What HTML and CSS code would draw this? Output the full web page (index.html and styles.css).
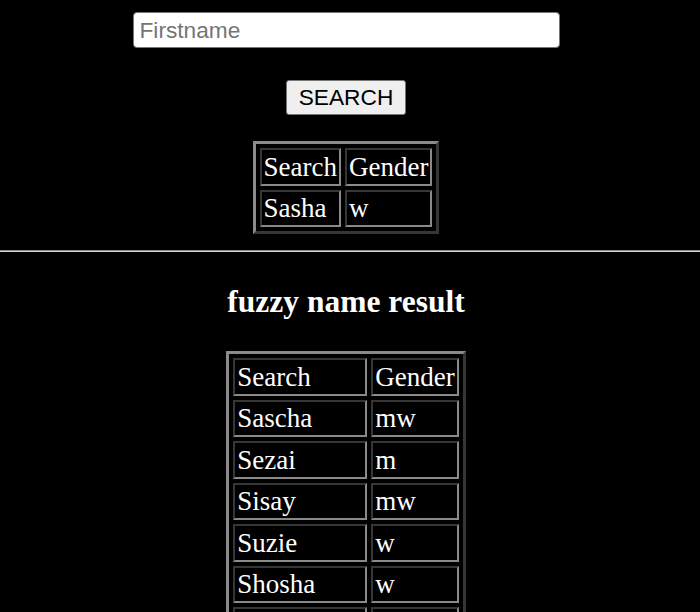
FILE: index.html
```html
<!DOCTYPE html>
<html>
<head>
<meta charset="utf-8">
<link rel="stylesheet" href="styles.css">
</head>
<body>
<div class="top">
  <input class="name-input" type="text" placeholder="Firstname">
  <button class="search-btn">SEARCH</button>
  <table class="grid grid-small">
    <tr><td>Search</td><td>Gender</td></tr>
    <tr><td>Sasha</td><td>w</td></tr>
  </table>
</div>
<hr class="divider">
<div class="bottom">
  <h2 class="result-title">fuzzy name result</h2>
  <table class="grid grid-large">
    <tr><td class="name-col">Search</td><td>Gender</td></tr>
    <tr><td class="name-col">Sascha</td><td>mw</td></tr>
    <tr><td class="name-col">Sezai</td><td>m</td></tr>
    <tr><td class="name-col">Sisay</td><td>mw</td></tr>
    <tr><td class="name-col">Suzie</td><td>w</td></tr>
    <tr><td class="name-col">Shosha</td><td>w</td></tr>
    <tr><td class="name-col">&nbsp;</td><td>&nbsp;</td></tr>
  </table>
</div>
</body>
</html>
```

FILE: styles.css
```css
html, body {
  margin: 0;
  padding: 0;
  background: #000;
  color: #fff;
  overflow: hidden;
  height: 612px;
}

body {
  font-family: "Liberation Serif", "Times New Roman", serif;
}

.top, .bottom {
  display: flex;
  flex-direction: column;
  align-items: center;
  padding-right: 8px;
}

.top {
  padding-top: 12px;
}

.name-input {
  box-sizing: border-box;
  width: 427px;
  height: 36px;
  margin: 0;
  padding: 0 6px;
  border: 1.5px solid #767676;
  border-radius: 4px;
  background: #fff;
  font-family: "Liberation Sans", Arial, sans-serif;
  font-size: 22.7px;
  color: #000;
}

.name-input::placeholder {
  color: #757575;
}

.search-btn {
  box-sizing: border-box;
  width: 120px;
  height: 35px;
  margin-top: 32px;
  padding: 0;
  border: 1.5px solid #767676;
  border-radius: 3px;
  background: #efefef;
  color: #000;
  font-family: "Liberation Sans", Arial, sans-serif;
  font-size: 22.7px;
}

.grid {
  border: 3px outset #8a8a8a;
  border-spacing: 4px;
  border-collapse: separate;
}

.grid td {
  border: 2px inset #8a8a8a;
  padding: 1.5px 2px;
  font-size: 27px;
  line-height: 30.5px;
  text-align: left;
  white-space: nowrap;
}

.grid-small {
  margin-top: 26px;
}

.grid-large .name-col {
  width: 126px;
}

.divider {
  margin: 16px 0 0;
  height: 0;
  border: 0;
  border-top: 1.7px solid #8c8c8c;
  border-bottom: 1.7px solid #d4d4d4;
}

.result-title {
  margin: 32px 0 31px;
  font-size: 31.5px;
  line-height: 36px;
  font-weight: bold;
}
```
